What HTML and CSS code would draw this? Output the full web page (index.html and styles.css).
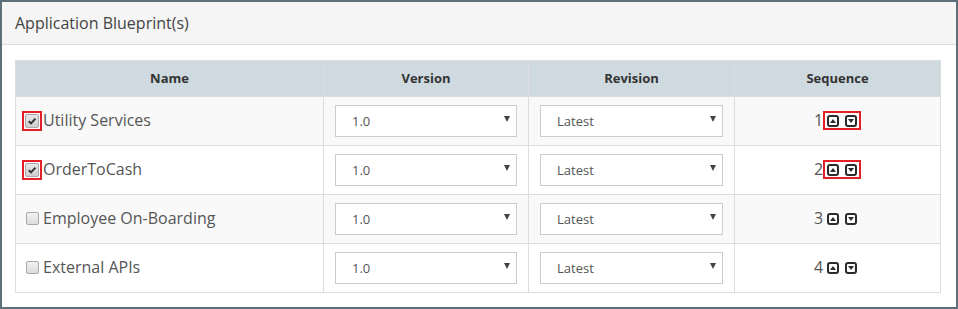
FILE: index.html
```html
<!DOCTYPE html>
<html lang="en">
<head>
  <meta charset="UTF-8">
  <title>Application Blueprints</title>
  <link rel="stylesheet" href="styles.css">
</head>
<body>
  <div class="panel">
    <div class="panel-heading">Application Blueprint(s)</div>
    <div class="panel-body">
      <table class="bp-table">
        <thead>
          <tr>
            <th class="col-name">Name</th>
            <th class="col-version">Version</th>
            <th class="col-revision">Revision</th>
            <th class="col-seq">Sequence</th>
          </tr>
        </thead>
        <tbody>
          <tr>
            <td>
              <div class="name-line">
                <span class="check-wrap marked"><span class="check on"><svg viewBox="0 0 10 10" width="10" height="10"><path d="M1.8 5.2 L4 7.4 L8.4 2.6" fill="none" stroke="#333" stroke-width="2"/></svg></span></span>
                <span class="bp-name">Utility Services</span>
              </div>
            </td>
            <td><div class="dropdown"><select><option>1.0</option></select></div></td>
            <td><div class="dropdown"><select><option>Latest</option></select></div></td>
            <td>
              <div class="seq-line">
                <span class="seq-num">1</span>
                <span class="arrows marked">
                  <svg class="arrow" viewBox="0 0 12 12" width="12" height="12"><rect x="1" y="1" width="10" height="10" rx="2" fill="#fff" stroke="#2b2b2b" stroke-width="2"/><path d="M3 8 H9 L6 4 Z" fill="#2b2b2b"/></svg>
                  <svg class="arrow" viewBox="0 0 12 12" width="12" height="12"><rect x="1" y="1" width="10" height="10" rx="2" fill="#fff" stroke="#2b2b2b" stroke-width="2"/><path d="M3 4 H9 L6 8 Z" fill="#2b2b2b"/></svg>
                </span>
              </div>
            </td>
          </tr>
          <tr>
            <td>
              <div class="name-line">
                <span class="check-wrap marked"><span class="check on"><svg viewBox="0 0 10 10" width="10" height="10"><path d="M1.8 5.2 L4 7.4 L8.4 2.6" fill="none" stroke="#333" stroke-width="2"/></svg></span></span>
                <span class="bp-name">OrderToCash</span>
              </div>
            </td>
            <td><div class="dropdown"><select><option>1.0</option></select></div></td>
            <td><div class="dropdown"><select><option>Latest</option></select></div></td>
            <td>
              <div class="seq-line">
                <span class="seq-num">2</span>
                <span class="arrows marked">
                  <svg class="arrow" viewBox="0 0 12 12" width="12" height="12"><rect x="1" y="1" width="10" height="10" rx="2" fill="#fff" stroke="#2b2b2b" stroke-width="2"/><path d="M3 8 H9 L6 4 Z" fill="#2b2b2b"/></svg>
                  <svg class="arrow" viewBox="0 0 12 12" width="12" height="12"><rect x="1" y="1" width="10" height="10" rx="2" fill="#fff" stroke="#2b2b2b" stroke-width="2"/><path d="M3 4 H9 L6 8 Z" fill="#2b2b2b"/></svg>
                </span>
              </div>
            </td>
          </tr>
          <tr>
            <td>
              <div class="name-line">
                <span class="check-wrap"><span class="check"></span></span>
                <span class="bp-name">Employee On-Boarding</span>
              </div>
            </td>
            <td><div class="dropdown"><select><option>1.0</option></select></div></td>
            <td><div class="dropdown"><select><option>Latest</option></select></div></td>
            <td>
              <div class="seq-line">
                <span class="seq-num">3</span>
                <span class="arrows">
                  <svg class="arrow" viewBox="0 0 12 12" width="12" height="12"><rect x="1" y="1" width="10" height="10" rx="2" fill="#fff" stroke="#2b2b2b" stroke-width="2"/><path d="M3 8 H9 L6 4 Z" fill="#2b2b2b"/></svg>
                  <svg class="arrow" viewBox="0 0 12 12" width="12" height="12"><rect x="1" y="1" width="10" height="10" rx="2" fill="#fff" stroke="#2b2b2b" stroke-width="2"/><path d="M3 4 H9 L6 8 Z" fill="#2b2b2b"/></svg>
                </span>
              </div>
            </td>
          </tr>
          <tr>
            <td>
              <div class="name-line">
                <span class="check-wrap"><span class="check"></span></span>
                <span class="bp-name">External APIs</span>
              </div>
            </td>
            <td><div class="dropdown"><select><option>1.0</option></select></div></td>
            <td><div class="dropdown"><select><option>Latest</option></select></div></td>
            <td>
              <div class="seq-line">
                <span class="seq-num">4</span>
                <span class="arrows">
                  <svg class="arrow" viewBox="0 0 12 12" width="12" height="12"><rect x="1" y="1" width="10" height="10" rx="2" fill="#fff" stroke="#2b2b2b" stroke-width="2"/><path d="M3 8 H9 L6 4 Z" fill="#2b2b2b"/></svg>
                  <svg class="arrow" viewBox="0 0 12 12" width="12" height="12"><rect x="1" y="1" width="10" height="10" rx="2" fill="#fff" stroke="#2b2b2b" stroke-width="2"/><path d="M3 4 H9 L6 8 Z" fill="#2b2b2b"/></svg>
                </span>
              </div>
            </td>
          </tr>
        </tbody>
      </table>
    </div>
  </div>
</body>
</html>
```

FILE: styles.css
```css
* {
  box-sizing: border-box;
}

html, body {
  margin: 0;
  padding: 0;
  font-family: "Open Sans", Arial, sans-serif;
  color: #555;
  background: #fff;
}

.panel {
  height: 100vh;
  border: 2px solid #5d7079;
  background: #fff;
}

.panel-heading {
  height: 43px;
  padding: 10px 13px 0;
  background-color: #f5f5f5;
  border-bottom: 1px solid #ddd;
  font-size: 16px;
  line-height: 22px;
  color: #444;
}

.panel-body {
  padding: 15px 15px 15px 13px;
}

.bp-table {
  width: 100%;
  border-collapse: collapse;
  border: 1px solid #ddd;
}

.bp-table th {
  height: 36px;
  padding: 0 8px 2px;
  background-color: #cedadf;
  border: 1px solid #ddd;
  border-top: 0;
  font-size: 13px;
  font-weight: bold;
  color: #333;
  text-align: center;
}

.col-name { width: 308px; }
.col-version { width: 205px; }
.col-revision { width: 206px; }

.bp-table td {
  height: 49px;
  padding: 0 11px 1px;
  border: 1px solid #ddd;
  vertical-align: middle;
}

.bp-table tbody tr:nth-child(odd) td {
  background-color: #f9f9f9;
}

.name-line {
  display: flex;
  align-items: center;
  margin-left: -5px;
  font-size: 16px;
}

.check-wrap {
  display: flex;
  align-items: center;
  justify-content: center;
  width: 20px;
  height: 20px;
  border: 2px solid transparent;
}

.check-wrap.marked {
  border-color: #e3202a;
}

.check {
  display: flex;
  align-items: center;
  justify-content: center;
  width: 13px;
  height: 13px;
  border: 1px solid #a9a9a9;
  border-radius: 2px;
  background: linear-gradient(#f2f2f2, #dcdcdc);
}

.check.on {
  width: 14px;
  height: 14px;
  background: linear-gradient(#e6e6e6, #cfcfcf);
}

.bp-name {
  margin-left: 1px;
  margin-top: -1px;
}

.dropdown {
  position: relative;
  height: 32px;
}

.dropdown select {
  appearance: none;
  -webkit-appearance: none;
  width: 100%;
  height: 32px;
  padding: 1px 24px 0 16px;
  border: 1px solid #ccc;
  border-radius: 0;
  background: #fff;
  font-family: "Open Sans", Arial, sans-serif;
  font-size: 13px;
  color: #555;
}

.dropdown::after {
  content: "";
  position: absolute;
  right: 7px;
  top: 11px;
  border-left: 3.5px solid transparent;
  border-right: 3.5px solid transparent;
  border-top: 6px solid #444;
}

.seq-line {
  display: flex;
  justify-content: center;
  align-items: center;
  font-size: 16px;
}

.seq-num {
  margin-top: -1px;
}

.arrows {
  display: flex;
  align-items: center;
  gap: 6px;
  height: 19px;
  padding: 0 2px;
  border: 2px solid transparent;
}

.arrows.marked {
  border-color: #e3202a;
}

.arrow {
  display: block;
}
```
